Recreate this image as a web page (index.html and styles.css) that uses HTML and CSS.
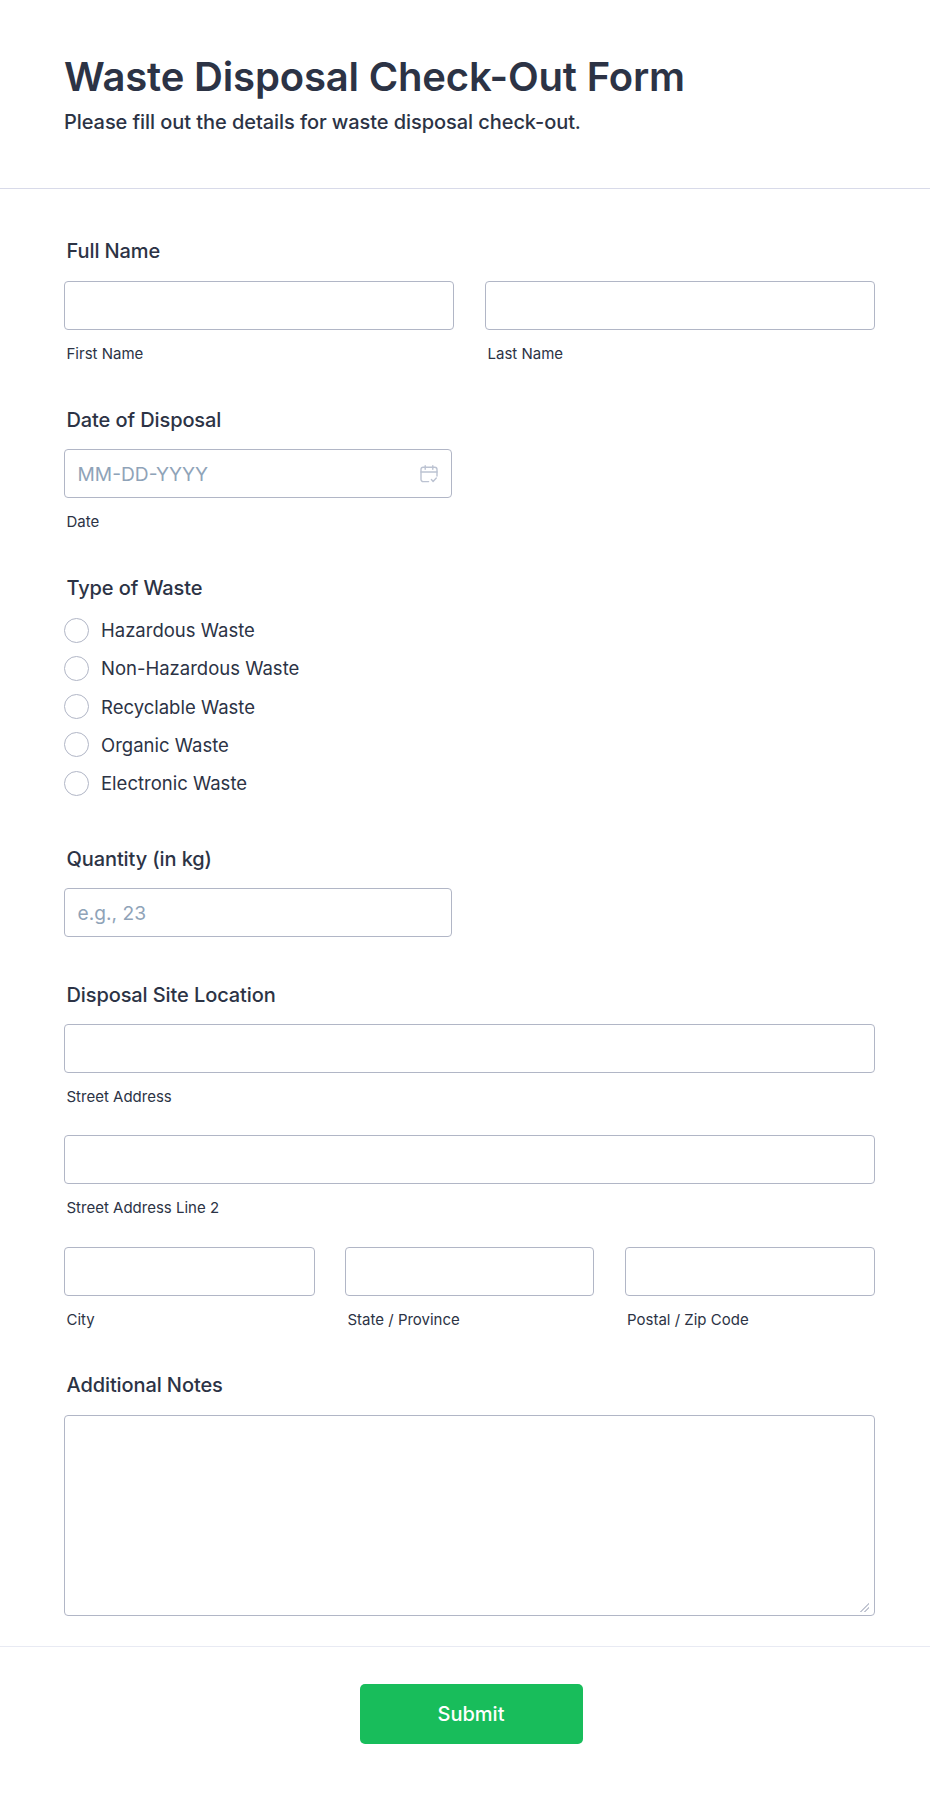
FILE: index.html
```html
<!DOCTYPE html>
<html lang="en">
<head>
<meta charset="utf-8">
<title>Waste Disposal Check-Out Form</title>
<link rel="stylesheet" href="styles.css">
</head>
<body>
<form class="form">
  <header class="header">
    <h1 class="title">Waste Disposal Check-Out Form</h1>
    <p class="subtitle">Please fill out the details for waste disposal check-out.</p>
  </header>
  <div class="fields">
    <section class="field field-name">
      <div class="label">Full Name</div>
      <div class="row row-2">
        <label class="part"><input class="input" type="text"><span class="sub">First Name</span></label>
        <label class="part"><input class="input" type="text"><span class="sub">Last Name</span></label>
      </div>
    </section>
    <section class="field field-date">
      <div class="label">Date of Disposal</div>
      <label class="part narrow">
        <span class="date-wrap">
          <input class="input" type="text" placeholder="MM-DD-YYYY">
          <svg class="cal" viewBox="0 0 18 18" width="18" height="18" fill="none" stroke="#bcc3d2" stroke-width="1.4" stroke-linecap="round" stroke-linejoin="round">
            <path d="M8.6 16.6H3.2A2.2 2.2 0 0 1 1 14.4V4.4a2.2 2.2 0 0 1 2.2-2.2h11.6A2.2 2.2 0 0 1 17 4.4v6.6"/>
            <path d="M1 7h16"/>
            <path d="M5.2 .8v3.4M12.8 .8v3.4"/>
            <path d="M11.4 14.6l1.7 1.8 3.2-3.4"/>
          </svg>
        </span>
        <span class="sub">Date</span>
      </label>
    </section>
    <section class="field field-type">
      <div class="label">Type of Waste</div>
      <div class="radios">
        <label class="radio"><input class="radio-input" type="radio" name="waste"><span>Hazardous Waste</span></label>
        <label class="radio"><input class="radio-input" type="radio" name="waste"><span>Non-Hazardous Waste</span></label>
        <label class="radio"><input class="radio-input" type="radio" name="waste"><span>Recyclable Waste</span></label>
        <label class="radio"><input class="radio-input" type="radio" name="waste"><span>Organic Waste</span></label>
        <label class="radio"><input class="radio-input" type="radio" name="waste"><span>Electronic Waste</span></label>
      </div>
    </section>
    <section class="field field-qty">
      <div class="label">Quantity (in kg)</div>
      <div class="narrow"><input class="input" type="text" placeholder="e.g., 23"></div>
    </section>
    <section class="field field-site">
      <div class="label">Disposal Site Location</div>
      <div class="stack">
        <label class="part"><input class="input" type="text"><span class="sub">Street Address</span></label>
        <label class="part"><input class="input" type="text"><span class="sub">Street Address Line 2</span></label>
        <div class="row row-3">
          <label class="part"><input class="input" type="text"><span class="sub">City</span></label>
          <label class="part"><input class="input" type="text"><span class="sub">State / Province</span></label>
          <label class="part"><input class="input" type="text"><span class="sub">Postal / Zip Code</span></label>
        </div>
      </div>
    </section>
    <section class="field field-notes">
      <div class="label">Additional Notes</div>
      <textarea class="input textarea"></textarea>
    </section>
  </div>
  <footer class="footer">
    <button class="submit" type="button">Submit</button>
  </footer>
</form>
</body>
</html>
```
FILE: styles.css
```css
* { box-sizing: border-box; }
html, body { margin: 0; padding: 0; background: #fff; }
body {
  font-family: Inter, "Liberation Sans", sans-serif;
  color: #2c3345;
}
.form { width: 930px; height: 1793px; display: flex; flex-direction: column; }
.header { height: 189px; padding: 51px 55px 0 64px; border-bottom: 1px solid #d8dae9; }
.title { margin: 0; font-size: 40px; line-height: 52px; font-weight: 600; color: #2c3345; letter-spacing: -.16px; }
.subtitle { margin: 7px 0 0; font-size: 20px; line-height: 24px; font-weight: 450; color: #2c3345; letter-spacing: -.07px; }
.fields { padding: 0 55px 0 64px; height: 1458px; border-bottom: 1px solid #e8eaf3; }
.field { display: block; }
.field-name { padding-top: 50px; }
.field-date { padding-top: 45px; }
.field-type { padding-top: 45px; }
.field-qty { padding-top: 52px; }
.field-site { padding-top: 46px; }
.field-notes { padding-top: 44px; }
.label { margin: 0 0 0 2.5px; font-size: 20px; line-height: 24px; font-weight: 450; letter-spacing: -.1px; color: #2c3345; height: 41px; }
.field-name .label, .field-type .label, .field-notes .label { height: 42px; }
.row { display: grid; }
.row-2 { grid-template-columns: 1fr 1fr; column-gap: 31px; }
.row-3 { grid-template-columns: 250.5px 249px 250.5px; column-gap: 30.5px; margin-top: 1px; }
.part { display: block; }
.narrow { display: block; width: 388px; }
.stack { display: flex; flex-direction: column; row-gap: 29px; }
.input {
  display: block; width: 100%; height: 49px; padding: 0 12.5px;
  border: 1px solid #b1b6c6; border-radius: 4px; background: #fff;
  font: 400 19.2px Inter, "Liberation Sans", sans-serif; color: #2c3345; outline: none;
}
.input::placeholder { color: #8fa3b8; opacity: 1; }
.sub { display: block; margin: 15px 0 0 2.5px; font-size: 15px; line-height: 18px; color: #2c3345; }
.date-wrap { display: block; position: relative; }
.cal { position: absolute; right: 14px; top: 16px; }
.radios { display: flex; flex-direction: column; row-gap: 14.3px; }
.radio { display: flex; align-items: center; column-gap: 12px; height: 24px; font-size: 18.5px; line-height: 24px; color: #2c3345; }
.radio-input { appearance: none; flex: none; width: 25px; height: 25px; margin: 0; border: 1px solid #b1b6c6; border-radius: 50%; background: #fff; }
.textarea { height: 201px; padding: 10px 12px; resize: vertical; }
.textarea::-webkit-resizer {
  background: linear-gradient(135deg, transparent 48%, #c3c7d3 48% 58%, transparent 58% 72%, #c3c7d3 72% 82%, transparent 82%) no-repeat 1px 3px / 9px 9px;
}
.footer { flex: 1; display: flex; justify-content: center; align-items: flex-start; padding: 37px 0 0 12px; }
.submit {
  width: 223px; height: 60px; border: 0; border-radius: 5px; background: #18bd5b;
  color: #fff; font: 500 20px Inter, "Liberation Sans", sans-serif;
}
```
